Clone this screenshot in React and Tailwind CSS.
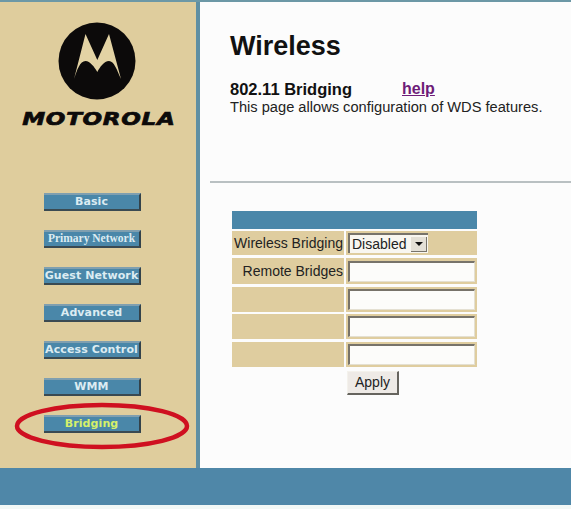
const navItems = [
  { label: "Basic" },
  { label: "Primary Network", serif: true },
  { label: "Guest Network" },
  { label: "Advanced" },
  { label: "Access Control" },
  { label: "WMM" },
  { label: "Bridging", active: true },
];

function NavButton({ label, serif, active }) {
  return (
    <div
      className={`flex h-[18px] w-[97px] items-center justify-center whitespace-nowrap border-t-2 border-r-2 border-b-2 border-t-[#7f9fb0] border-r-[#33424a] border-b-[#3a4a52] bg-[#4a87a9] font-bold ${
        serif
          ? "font-['Liberation_Serif',serif] text-[11.5px]"
          : "font-['DejaVu_Sans',sans-serif] text-[11px] tracking-[0.1px]"
      } ${active ? "text-[#d6f06a]" : "text-[#dcecf2]"}`}
    >
      {label}
    </div>
  );
}

function Logo() {
  return (
    <svg width="78" height="78" viewBox="0 0 78 78" className="block">
      <circle cx="39" cy="39" r="38.5" fill="#0c0a0a" />
      <path
        d="M16 57 L27.500 12 L39.300 38 L51 12 L63 57 C59 48 56 39 51 39 C46 39 42 45 39.300 50 C36.500 45 32 39 27.500 39 C22 39 19 48 16 57 Z"
        fill="#e3d3a4"
      />
    </svg>
  );
}

function Row({ label, children, className = "" }) {
  return (
    <div className={`grid grid-cols-[112px_131px] gap-x-[2px] ${className}`}>
      <div className="flex items-center justify-end whitespace-nowrap bg-[#dfcd9f] pr-[1px] text-[14px] text-[#222]">
        {label}
      </div>
      <div className="flex items-center bg-[#dfcd9f] px-[2px]">{children}</div>
    </div>
  );
}

function TextBox() {
  return (
    <div className="h-[21px] w-full border-t-2 border-l-2 border-r border-b border-t-[#77736a] border-l-[#77736a] border-r-[#e4e0d2] border-b-[#e4e0d2] bg-[#fcfcfa]" />
  );
}

export default function App() {
  return (
    <div className="relative flex h-[509px] w-[571px] flex-col overflow-hidden bg-[#fcfcfc] font-['Liberation_Sans',Arial,sans-serif] text-[#111]">
      <div className="h-[2px] bg-[#6c98a6]" />

      <div className="flex flex-1">
        <aside className="flex w-[200px] flex-col items-center border-r-4 border-r-[#5f8fa3] bg-[#dfcd9d]">
          <div className="mt-[20px] ml-[-2px]">
            <Logo />
          </div>
          <div className="mt-[9px] ml-[1px] scale-x-[1.28] font-['DejaVu_Sans',sans-serif] text-[18px] leading-[20px] font-bold tracking-[0.55px] text-[#0c0a0a] italic [-webkit-text-stroke:0.7px_#0c0a0a]">
            MOTOROLA
          </div>
          <nav className="mt-[64px] ml-[-11px] flex flex-col gap-[19px]">
            {navItems.map((item) => (
              <NavButton key={item.label} {...item} />
            ))}
          </nav>
        </aside>

        <main className="flex-1">
          <div className="h-[179px] pt-[29px] pl-[30px]">
            <h1 className="text-[27px] leading-[31px] font-bold">Wireless</h1>
            <div className="mt-[18px] flex text-[16px] leading-[18px] font-bold">
              <span className="w-[172px] text-[16.5px]">802.11 Bridging</span>
              <a className="text-[#6e1c78] underline">help</a>
            </div>
            <p className="text-[14.65px] leading-[18px] text-[#222]">
              This page allows configuration of WDS features.
            </p>
          </div>
          <hr className="ml-[10px] border-0 border-t-2 border-t-[#b9c0c2]" />

          <div className="mt-[28px] ml-[32px] w-[245px]">
            <div className="h-[18px] bg-[#4a87a9]" />
            <Row label="Wireless Bridging" className="mt-[2px] h-[24px]">
              <div className="flex h-[20px] w-[80px] items-center justify-between border-t-2 border-l-2 border-[#77736a] bg-[#f8f6f0] pl-[2px] text-[14px] text-[#222]">
                Disabled
                <span className="mr-[1px] flex h-[15px] w-[16px] items-center justify-center border-r border-b border-r-[#77736a] border-b-[#77736a] bg-[#e4e0d6]">
                  <span className="border-x-[4px] border-t-[4px] border-x-transparent border-t-[#111]" />
                </span>
              </div>
            </Row>
            <Row label="Remote Bridges" className="mt-[3px] h-[26px]">
              <TextBox />
            </Row>
            <Row label="" className="mt-[3px] h-[25px]">
              <TextBox />
            </Row>
            <Row label="" className="mt-[2px] h-[25px]">
              <TextBox />
            </Row>
            <Row label="" className="mt-[3px] h-[25px]">
              <TextBox />
            </Row>
            <div className="mt-[4px] ml-[115px] flex h-[24px] w-[52px] items-center justify-center border-t border-l border-r-2 border-b-2 border-t-[#f4f2ec] border-l-[#f4f2ec] border-r-[#66645e] border-b-[#66645e] bg-[#eeeae6] text-[14px] text-[#222]">
              Apply
            </div>
          </div>
        </main>
      </div>

      <div className="h-[37px] bg-[#4f87a8]" />
      <div className="h-[4px] bg-[#f2f8f6]" />

      <svg
        width="180"
        height="52"
        viewBox="0 0 180 52"
        className="absolute top-[400px] left-[12px]"
      >
        <ellipse cx="90" cy="26" rx="85" ry="21" fill="none" stroke="#cf1020" strokeWidth="4.500" />
      </svg>
    </div>
  );
}
